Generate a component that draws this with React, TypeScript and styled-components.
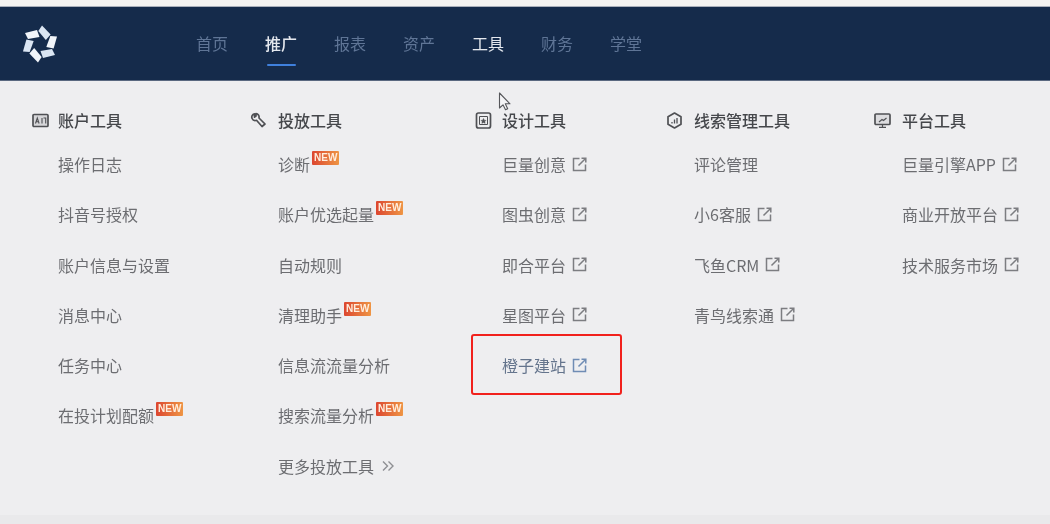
import React from 'react';
import styled, { createGlobalStyle } from 'styled-components';

interface ToolItem {
  label: string;
  isNew?: boolean;
  external?: boolean;
  more?: boolean;
  highlight?: boolean;
}

interface ToolGroup {
  title: string;
  width: number;
  indent: number;
  icon: React.ReactElement;
  items: ToolItem[];
}

const GlobalStyle = createGlobalStyle`
  html, body { margin: 0; padding: 0; background: #eeeef0; }
  body { font-family: "Noto Sans CJK SC", "Noto Sans", sans-serif; }
`;

const Page = styled.div`
  position: relative;
  width: 1050px;
  height: 524px;
  overflow: hidden;
  display: flex;
  flex-direction: column;
  background: #eeeef0;
  filter: blur(0.5px);
`;

const TopStrip = styled.div`
  height: 7px;
  background: #f4f3f1;
  border-bottom: 1px solid #a9afba;
  box-sizing: border-box;
`;

const NavBar = styled.header`
  height: 74px;
  background: #152b4b;
  border-bottom: 1px solid #5a6880;
  box-sizing: border-box;
  display: flex;
  align-items: stretch;
  padding-left: 22px;
`;

const Logo = styled.svg`
  width: 36px;
  height: 36px;
  align-self: center;
  margin-right: 138px;
  overflow: visible;
`;

const NavList = styled.nav`
  display: flex;
  gap: 37px;
`;

const NavItem = styled.a<{ $active?: boolean; $bright?: boolean }>`
  position: relative;
  width: 32px;
  font-size: 16px;
  line-height: 72px;
  white-space: nowrap;
  color: ${(p) => (p.$active || p.$bright ? '#e4e8ee' : '#5f7596')};
  font-weight: ${(p) => (p.$active ? 500 : 400)};

  ${(p) =>
    p.$active &&
    `&::after {
      content: '';
      position: absolute;
      left: 2px;
      right: 1px;
      bottom: 14px;
      height: 2px;
      background: #3f80dc;
      border-radius: 1px;
    }`}
`;

const Columns = styled.main`
  flex: 1;
  display: flex;
  padding: 27px 0 0 32px;
`;

const Column = styled.section<{ $width: number }>`
  width: ${(p) => p.$width}px;
  flex: none;
`;

const GroupTitle = styled.h3`
  margin: 0 0 20px;
  height: 24px;
  display: flex;
  align-items: center;
  font-size: 16px;
  line-height: 24px;
  font-weight: 500;
  color: #45474b;
  white-space: nowrap;
`;

const IconSlot = styled.span<{ $indent: number }>`
  width: ${(p) => p.$indent}px;
  flex: none;
  display: flex;
  align-items: center;
`;

const ItemList = styled.ul<{ $indent: number }>`
  list-style: none;
  margin: 0;
  padding: 0 0 0 ${(p) => p.$indent}px;
  display: flex;
  flex-direction: column;
  gap: 26.3px;
`;

const Item = styled.li<{ $highlight?: boolean }>`
  position: relative;
  height: 24px;
  display: flex;
  align-items: center;
  font-size: 16px;
  line-height: 24px;
  white-space: nowrap;
  color: ${(p) => (p.$highlight ? '#64748c' : '#6c6d71')};
`;

const NewBadge = styled.span`
  position: relative;
  top: -6px;
  margin-left: 2px;
  height: 14px;
  padding: 0 2px;
  font-family: "Liberation Sans", Arial, sans-serif;
  font-size: 10px;
  font-weight: 700;
  line-height: 14px;
  color: #ffeede;
  background: linear-gradient(90deg, #dc4630, #ee9544);
  border-radius: 1px;
`;

const ExternalIcon = styled.svg<{ $highlight?: boolean }>`
  width: 15px;
  height: 15px;
  margin-left: 6px;
  fill: none;
  stroke: ${(p) => (p.$highlight ? '#6f8cb4' : '#7c7d81')};
  stroke-width: 1.5;
`;

const MoreIcon = styled.svg`
  width: 12px;
  height: 12px;
  margin-left: 8px;
  fill: none;
  stroke: #8e8f93;
  stroke-width: 1.4;
`;

const RedFrame = styled.span`
  position: absolute;
  left: -31px;
  top: -19px;
  width: 151px;
  height: 61px;
  box-sizing: border-box;
  border: 2px solid #f1211c;
  border-radius: 3px;
`;

const Cursor = styled.svg`
  position: absolute;
  left: 498px;
  top: 92px;
  width: 15px;
  height: 20px;
`;

const BottomStrip = styled.div`
  height: 9px;
  background: #e9e9eb;
`;

const GroupSvg = styled.svg`
  width: 17px;
  height: 17px;
  fill: none;
  stroke: #4f5054;
  stroke-width: 1.7;
`;

const groups: ToolGroup[] = [
  {
    title: '账户工具',
    width: 218,
    indent: 26,
    icon: (
      <GroupSvg viewBox="0 0 17 17">
        <rect x="1" y="2.500" width="15" height="12" rx="1" fill="#d6d6d9" />
        <path d="M3.500 11.500 5.300 6l1.800 5.500M4.200 9.800h2.200M10 6v5.500M11.500 6h2.200v5.500" strokeWidth="1.100" />
      </GroupSvg>
    ),
    items: [
      { label: '操作日志' },
      { label: '抖音号授权' },
      { label: '账户信息与设置' },
      { label: '消息中心' },
      { label: '任务中心' },
      { label: '在投计划配额', isNew: true },
    ],
  },
  {
    title: '投放工具',
    width: 225,
    indent: 28,
    icon: (
      <GroupSvg viewBox="0 0 17 17">
        <path d="M4.500 1.800C2.300 2.300 1.200 4.500 2.100 6.500 2.900 8.200 4.800 8.800 6.500 8.300L12 14.500 15 12 9 6C9.500 3.800 8 1.800 6 1.500V4L4.500 5.200z" strokeLinejoin="round" />
      </GroupSvg>
    ),
    items: [
      { label: '诊断', isNew: true },
      { label: '账户优选起量', isNew: true },
      { label: '自动规则' },
      { label: '清理助手', isNew: true },
      { label: '信息流流量分析' },
      { label: '搜索流量分析', isNew: true },
      { label: '更多投放工具', more: true },
    ],
  },
  {
    title: '设计工具',
    width: 191,
    indent: 27,
    icon: (
      <GroupSvg viewBox="0 0 17 17">
        <rect x="1.500" y="1" width="14" height="15" rx="2" />
        <path d="M4.500 4.500h8v8h-8z" strokeWidth="1" />
        <path d="m8.500 6.500.8 1.700 1.700.2-1.200 1.200.3 1.700-1.600-.8-1.600.8.300-1.700L6 8.400l1.700-.2z" fill="#4f5054" strokeWidth="0.500" />
      </GroupSvg>
    ),
    items: [
      { label: '巨量创意', external: true },
      { label: '图虫创意', external: true },
      { label: '即合平台', external: true },
      { label: '星图平台', external: true },
      { label: '橙子建站', external: true, highlight: true },
    ],
  },
  {
    title: '线索管理工具',
    width: 208,
    indent: 28,
    icon: (
      <GroupSvg viewBox="0 0 17 17">
        <path d="M8.500 1 15 4.700v7.600L8.500 16 2 12.300V4.700z" strokeLinejoin="round" />
        <path d="M6 11.500V10M8.500 11.500V7.500M11 11.500V6" strokeWidth="1.300" />
      </GroupSvg>
    ),
    items: [
      { label: '评论管理' },
      { label: '小6客服', external: true },
      { label: '飞鱼CRM', external: true },
      { label: '青鸟线索通', external: true },
    ],
  },
  {
    title: '平台工具',
    width: 176,
    indent: 28,
    icon: (
      <GroupSvg viewBox="0 0 17 17">
        <rect x="1" y="2" width="15" height="10.500" rx="1" fill="#dcdcdf" />
        <path d="M8.500 12.500V15M5 15.300h7M5 10l3-2.500 1.500 1L12.500 6" strokeWidth="1.200" />
      </GroupSvg>
    ),
    items: [
      { label: '巨量引擎APP', external: true },
      { label: '商业开放平台', external: true },
      { label: '技术服务市场', external: true },
    ],
  },
];

const navItems = [
  { label: '首页' },
  { label: '推广', active: true },
  { label: '报表' },
  { label: '资产' },
  { label: '工具', bright: true },
  { label: '财务' },
  { label: '学堂' },
];

function App(): React.ReactElement {
  return (
    <Page>
      <GlobalStyle />
      <TopStrip />
      <NavBar>
        <Logo viewBox="0 0 36 36">
          {[0, 60, 120, 180, 240, 300].map((deg, i) => (
            <polygon
              key={deg}
              points="3,7 15,4 17.500,11 6,13"
              fill={i % 2 ? '#dbe6f3' : '#f1f5fa'}
              transform={`rotate(${deg} 18 18)`}
            />
          ))}
        </Logo>
        <NavList>
          {navItems.map((n) => (
            <NavItem key={n.label} $active={n.active} $bright={n.bright}>
              {n.label}
            </NavItem>
          ))}
        </NavList>
      </NavBar>
      <Columns>
        {groups.map((g) => (
          <Column key={g.title} $width={g.width}>
            <GroupTitle>
              <IconSlot $indent={g.indent}>{g.icon}</IconSlot>
              {g.title}
            </GroupTitle>
            <ItemList $indent={g.indent}>
              {g.items.map((item) => (
                <Item key={item.label} $highlight={item.highlight}>
                  {item.label}
                  {item.isNew && <NewBadge>NEW</NewBadge>}
                  {item.external && (
                    <ExternalIcon viewBox="0 0 15 15" $highlight={item.highlight}>
                      <path d="M7.500 1.500H1.500v12h12V7.500" />
                      <path d="M6.500 8.500 13.300 1.700M9.500 1.200h4.300v4.300" />
                    </ExternalIcon>
                  )}
                  {item.more && (
                    <MoreIcon viewBox="0 0 12 12">
                      <path d="m1 1.500 4.500 4.500L1 10.500M6.500 1.500 11 6l-4.500 4.500" />
                    </MoreIcon>
                  )}
                  {item.highlight && <RedFrame />}
                </Item>
              ))}
            </ItemList>
          </Column>
        ))}
      </Columns>
      <BottomStrip />
      <Cursor viewBox="0 0 15 20">
        <path d="M1.500 1v15l3.500-3.200 2.500 5 2.200-1-2.400-5h4.700z" fill="#f4f4f6" stroke="#55565a" strokeWidth="1.100" strokeLinejoin="round" />
      </Cursor>
    </Page>
  );
}

export default App;
